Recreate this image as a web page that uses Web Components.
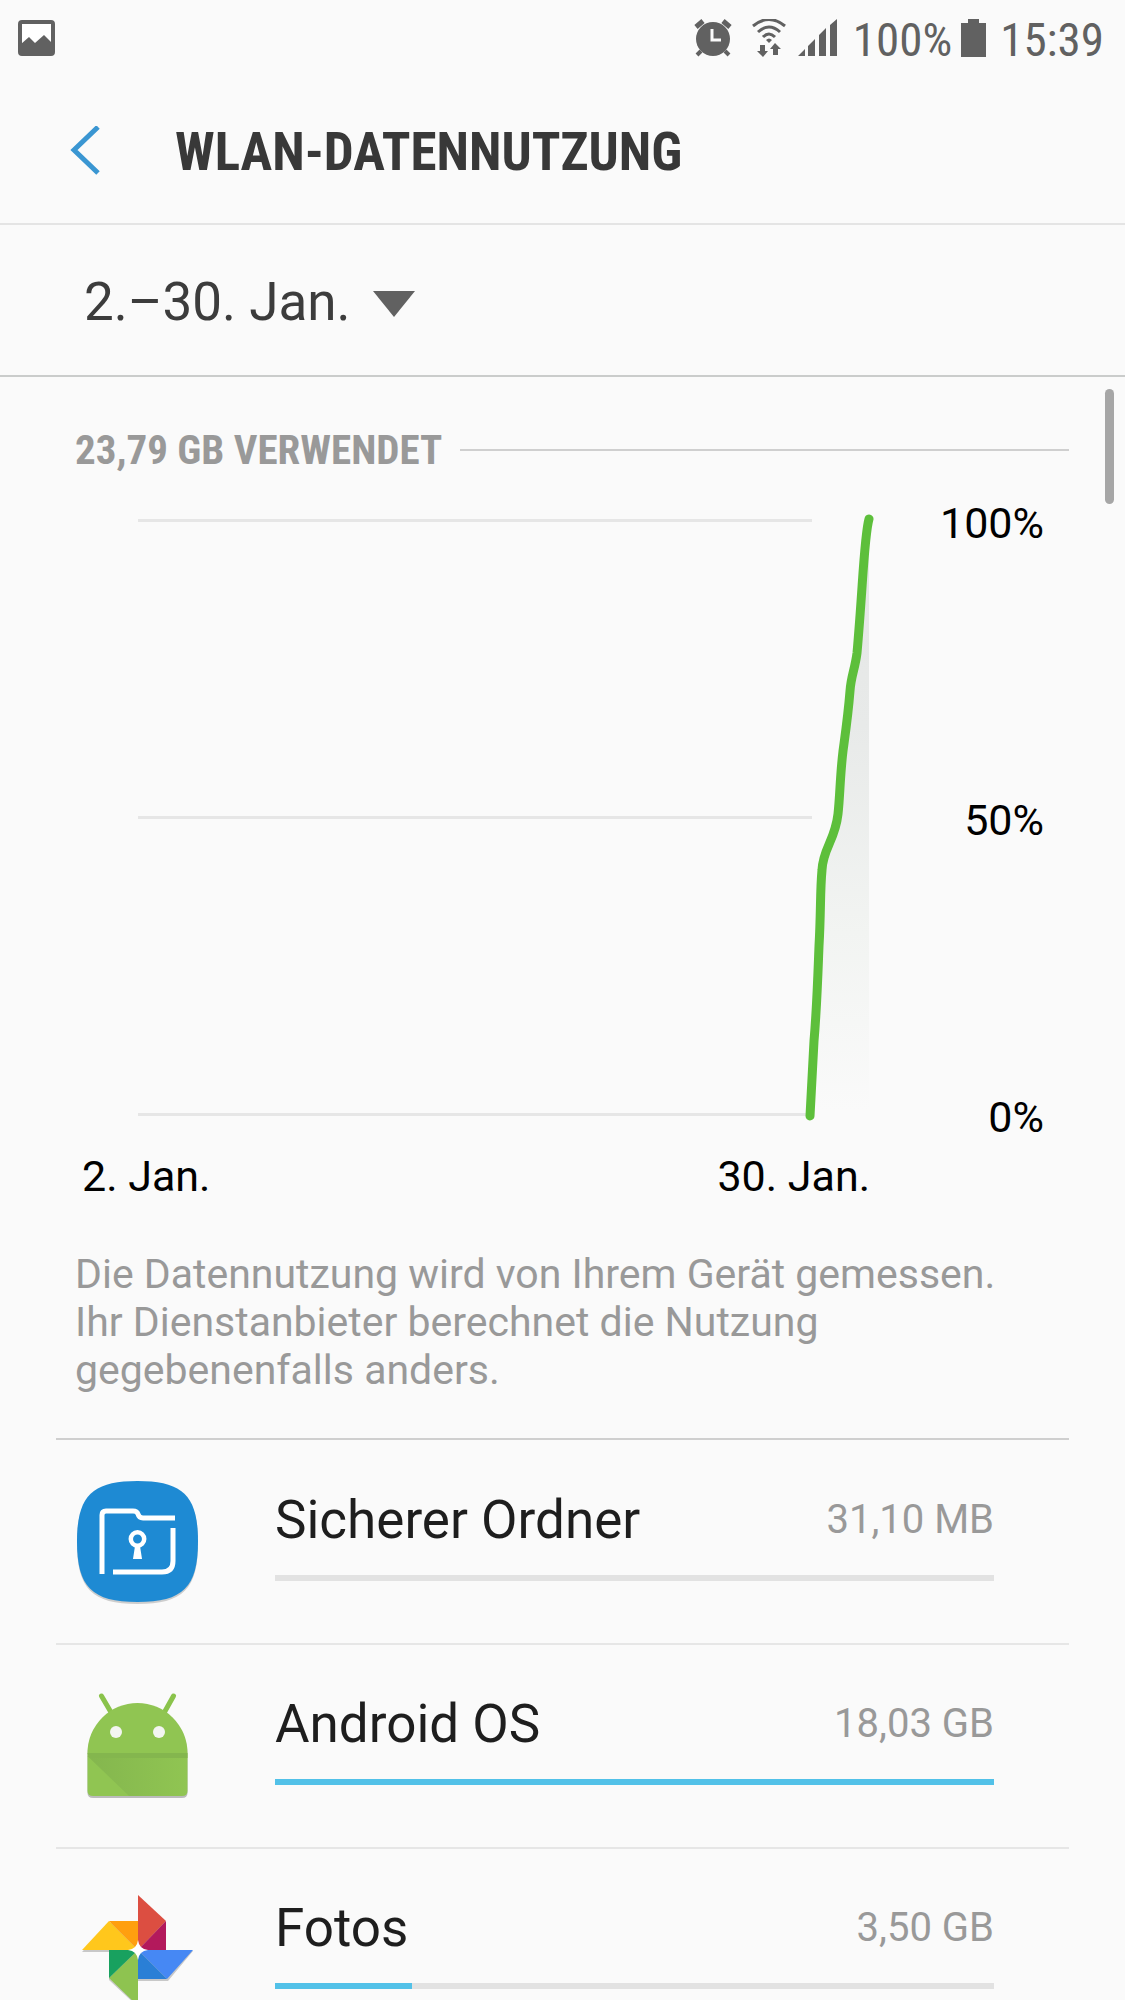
<!DOCTYPE html>
<html lang="de">
<head>
<meta charset="UTF-8">
<meta name="viewport" content="width=device-width, initial-scale=1.0">
<title>WLAN-Datennutzung</title>
<style>
  html, body {
    height: 100%;
    margin: 0;
  }
  body {
    background: #fafafa;
    color: #000;
    font-family: Roboto, sans-serif;
    --condensed: "Roboto Condensed", "Liberation Sans Narrow", Roboto, sans-serif;
    --muted: #999;
    --accent: #52c1e8;
  }
</style>
</head>
<body>
<data-usage-screen>
  <status-bar slot="status" battery="100%" time="15:39"></status-bar>
  <title-bar slot="title">WLAN-DATENNUTZUNG</title-bar>
  <cycle-picker slot="cycle"></cycle-picker>
  <section-heading>23,79 GB VERWENDET</section-heading>
  <usage-chart>
    <span slot="start">2. Jan.</span>
    <span slot="end">30. Jan.</span>
  </usage-chart>
  <usage-note>Die Datennutzung wird von Ihrem Gerät gemessen. Ihr Dienstanbieter berechnet die Nutzung gegebenenfalls anders.</usage-note>
  <app-row name="Sicherer Ordner" amount="31,10 MB" percent="0" first>
    <svg slot="icon" viewBox="0 0 122 122" aria-hidden="true">
      <path d="M60.500 2C106 2 121 16 121 62S106 123 60.500 123S0 108 0 62S15 2 60.500 2Z" fill="#000" opacity=".18"/>
      <path d="M60.500 0C106 0 121 15 121 60.500S106 121 60.500 121S0 106 0 60.500S15 0 60.500 0Z" fill="#1e8ad3"/>
      <path d="M25 93V34Q25 30 29 30H56Q60 30 61 33Q62 37 66 37H98" fill="none" stroke="#fff" stroke-width="5"/>
      <path d="M36 91H85Q96 91 96 80V47" fill="none" stroke="#fff" stroke-width="5"/>
      <circle cx="60.500" cy="58" r="6.700" fill="none" stroke="#fff" stroke-width="4.500"/>
      <path d="M58 65H63L65 78H56Z" fill="#fff"/>
    </svg>
  </app-row>
  <app-row name="Android OS" amount="18,03 GB" percent="100">
    <svg slot="icon" viewBox="0 0 122 122" aria-hidden="true">
      <defs>
        <linearGradient id="fold" x1="0" y1="0" x2="1" y2="0">
          <stop offset="0" stop-color="#84b64e"/>
          <stop offset="1" stop-color="#84b64e" stop-opacity="0"/>
        </linearGradient>
      </defs>
      <path d="M10.500 70A50 50 0 0 1 110.500 70V108Q110.500 113 105 113H16Q10.500 113 10.500 108Z" fill="#000" opacity=".25"/>
      <path d="M24.500 11L35 29M96.500 11L87 28" stroke="#8ac34b" stroke-width="5" stroke-linecap="round"/>
      <path d="M10.500 68A50 50 0 0 1 110.500 68V106Q110.500 111 105 111H16Q10.500 111 10.500 106Z" fill="#90c552"/>
      <path d="M10.500 71H110.500V107Q109 111 105 111H52Z" fill="url(#fold)"/>
      <path d="M10.500 68H110.500V73H12Z" fill="#84b64e"/>
      <circle cx="39" cy="47" r="6" fill="#f3f5f1"/>
      <circle cx="82" cy="47" r="6" fill="#f3f5f1"/>
    </svg>
  </app-row>
  <app-row name="Fotos" amount="3,50 GB" percent="19">
    <svg slot="icon" viewBox="0 0 122 122" aria-hidden="true">
      <path d="M61 8L89 34V61L116 62L91 92H61V118L32 91V63H5L32 34H61Z" fill="#000" opacity=".2"/>
      <path d="M61 6L89 32L61 61Z" fill="#dc4e41"/>
      <path d="M89 32V61H61Z" fill="#b3195c"/>
      <path d="M61 61H116L90 90Z" fill="#4688f4"/>
      <path d="M61 61L90 90H61Z" fill="#2a7fd6"/>
      <path d="M61 61V117L32 89Z" fill="#8ec350"/>
      <path d="M61 61L32 89V61Z" fill="#18a15f"/>
      <path d="M61 61H5L32 32Z" fill="#ffc71c"/>
      <path d="M61 61L32 32H61Z" fill="#ff9f0f"/>
      <path d="M61 51Q62 60 71 61Q62 62 61 71Q60 62 51 61Q60 60 61 51Z" fill="#fff"/>
    </svg>
  </app-row>
</data-usage-screen>

<script>
class DataUsageScreen extends HTMLElement {
  connectedCallback() {
    this.attachShadow({ mode: 'open' });
    this.shadowRoot.innerHTML = `
      <style>
        :host {
          display: flex;
          flex-direction: column;
          height: 100vh;
          overflow: hidden;
        }
        .content {
          position: relative;
          flex: 1;
          min-height: 0;
        }
        main {
          height: 100%;
          overflow-y: auto;
          scrollbar-width: none;
          box-sizing: border-box;
          padding: 0 56px;
        }
        /* overlay thumb, drawn above the list */
        .thumb {
          position: absolute;
          top: 12px;
          right: 11px;
          width: 9px;
          height: 115px;
          border-radius: 5px;
          background: #a6a6a6;
        }
      </style>
      <slot name="status"></slot>
      <slot name="title"></slot>
      <slot name="cycle"></slot>
      <div class="content">
        <main><slot></slot></main>
        <div class="thumb"></div>
      </div>
    `;
  }
}
customElements.define('data-usage-screen', DataUsageScreen);

class StatusBar extends HTMLElement {
  connectedCallback() {
    this.attachShadow({ mode: 'open' });
    this.shadowRoot.innerHTML = `
      <style>
        :host {
          display: flex;
          align-items: center;
          justify-content: space-between;
          flex: none;
          height: 78px;
          padding: 0 21px 0 18px;
          color: #616161;
          font-family: var(--condensed);
          font-size: 47px;
        }
        .right {
          display: flex;
          align-items: center;
        }
        svg {
          display: block;
          flex: none;
          height: 40px;
        }
        .alarm { margin-right: 20px; }
        .wifi { margin-right: 12px; }
        .signal { margin-right: 16px; }
        .battery { margin: 0 14px 0 9px; }
      </style>
      <svg width="38" viewBox="0 0 38 40" aria-hidden="true">
        <rect x="2" y="3" width="33" height="32" rx="2" fill="#fff" stroke="#616161" stroke-width="4"/>
        <path d="M3 25L11 18L17 24L26 16L34 24V35H3Z" fill="#616161"/>
      </svg>
      <div class="right">
        <svg class="alarm" width="38" viewBox="0 0 38 40" aria-hidden="true">
          <circle cx="19" cy="20" r="17" fill="#616161"/>
          <path d="M2 8L9 2M36 8L29 2" stroke="#616161" stroke-width="5"/>
          <path d="M7 32L3 36M31 32L35 36" stroke="#616161" stroke-width="4"/>
          <path d="M18 10V21H27" fill="none" stroke="#fafafa" stroke-width="3"/>
        </svg>
        <svg class="wifi" width="34" viewBox="0 0 34 40" aria-hidden="true">
          <path d="M1 7Q17 -6 33 7M6 13Q17 3 28 13M11 18Q17 12 23 18" fill="none" stroke="#616161" stroke-width="3"/>
          <path d="M14 21Q17 18 20 21L17 24Z" fill="#616161"/>
          <path d="M8 26H13V32H16L11 38L5 32H8ZM21 36H26V30H29L23 24L18 30H21Z" fill="#616161"/>
        </svg>
        <svg class="signal" width="39" viewBox="0 0 39 40" aria-hidden="true">
          <path d="M0 37L7 30V37ZM10 37V27L17 20V37ZM21 37V16L28 9V37ZM32 37V6L39 0V37Z" fill="#616161"/>
        </svg>
        <span>${this.getAttribute('battery')}</span>
        <svg class="battery" width="25" viewBox="0 0 25 40" aria-hidden="true">
          <path d="M0 4H7V0H18V4H25V38H0Z" fill="#616161"/>
        </svg>
        <span>${this.getAttribute('time')}</span>
      </div>
    `;
  }
}
customElements.define('status-bar', StatusBar);

class TitleBar extends HTMLElement {
  connectedCallback() {
    this.attachShadow({ mode: 'open' });
    this.shadowRoot.innerHTML = `
      <style>
        :host {
          display: flex;
          align-items: center;
          flex: none;
          gap: 73px;
          box-sizing: border-box;
          height: 147px;
          padding: 0 56px 0 70px;
          border-bottom: 2px solid #e4e4e4;
        }
        button {
          padding: 0;
          border: 0;
          background: none;
        }
        svg { display: block; }
        h1 {
          margin: 0;
          padding-top: 2px;
          color: #383838;
          font-family: var(--condensed);
          font-size: 53px;
          font-weight: 700;
        }
      </style>
      <button type="button" aria-label="Zurück">
        <svg width="32" height="50" viewBox="0 0 32 50">
          <path d="M28 1L4 24L28 47" fill="none" stroke="#3a96d2" stroke-width="5"/>
        </svg>
      </button>
      <h1><slot></slot></h1>
    `;
  }
}
customElements.define('title-bar', TitleBar);

class CyclePicker extends HTMLElement {
  connectedCallback() {
    this.attachShadow({ mode: 'open' });
    this.shadowRoot.innerHTML = `
      <style>
        :host {
          display: flex;
          align-items: center;
          flex: none;
          box-sizing: border-box;
          height: 152px;
          padding: 4px 84px 0;
          border-bottom: 2px solid #cacccb;
        }
        label {
          display: flex;
          align-items: center;
          gap: 22px;
        }
        select {
          appearance: none;
          field-sizing: content;
          margin: 0;
          padding: 0;
          border: 0;
          background: none;
          color: #3c3c3c;
          font-family: inherit;
          font-size: 53px;
          line-height: 64px;
        }
        svg {
          display: block;
          padding-top: 4px;
        }
      </style>
      <label>
        <select aria-label="Zeitraum">
          <option>2.–30. Jan.</option>
        </select>
        <svg width="42" height="26" viewBox="0 0 42 26" aria-hidden="true">
          <path d="M0 0H42L21 26Z" fill="#616161"/>
        </svg>
      </label>
    `;
  }
}
customElements.define('cycle-picker', CyclePicker);

class SectionHeading extends HTMLElement {
  connectedCallback() {
    this.attachShadow({ mode: 'open' });
    this.shadowRoot.innerHTML = `
      <style>
        :host {
          display: flex;
          align-items: center;
          gap: 18px;
          padding: 49px 0 0 19px;
        }
        h2 {
          margin: 0;
          color: var(--muted);
          font-family: var(--condensed);
          font-size: 41px;
          font-weight: 700;
          line-height: 48px;
        }
        .rule {
          flex: 1;
          height: 2px;
          background: #cfcfcf;
        }
      </style>
      <h2><slot></slot></h2>
      <div class="rule"></div>
    `;
  }
}
customElements.define('section-heading', SectionHeading);

class UsageChart extends HTMLElement {
  connectedCallback() {
    this.attachShadow({ mode: 'open' });
    this.shadowRoot.innerHTML = `
      <style>
        :host {
          display: block;
          padding: 23px 25px 0 26px;
          font-size: 43px;
          line-height: 52px;
        }
        .plot {
          display: flex;
          gap: 40px;
        }
        svg {
          display: block;
          flex: 1;
          min-width: 0;
        }
        .scale {
          display: flex;
          flex: 0 0 106px;
          flex-direction: column;
          justify-content: space-between;
          text-align: right;
        }
        .dates {
          display: flex;
          justify-content: space-between;
          padding: 7px 174px 0 0;
        }
      </style>
      <div class="plot">
        <svg viewBox="82 497 816 646" role="img" aria-label="Datennutzung">
          <defs>
            <linearGradient id="shade" gradientUnits="userSpaceOnUse" x1="0" y1="520" x2="0" y2="1110">
              <stop offset="0" stop-color="#e4e6e5"/>
              <stop offset=".35" stop-color="#e8eae9"/>
              <stop offset=".7" stop-color="#f2f4f2"/>
              <stop offset="1" stop-color="#fafafa"/>
            </linearGradient>
          </defs>
          <path d="M138 520.500H812M138 817.500H812M138 1114.500H812" stroke="#e6e6e6" stroke-width="3"/>
          <path d="M869 518C864 540 862 600 857 653C855 665 852 672 851 687C848 715 845 735 843 750C840 775 840 795 838 813C835 840 823 845 822 867C820 890 821 910 820 933C819 960 817 1005 814 1040L810 1115H869Z" fill="url(#shade)"/>
          <path d="M869 519C864 536 863 586 857 653C855 669 851 676 850 691C848 716 845 736 843 751C840 776 840 796 838 814C835 841 823 848 822 870C820 891 821 911 819 946C818 971 817 1006 814 1041L810 1116" fill="none" stroke="#5dbf3b" stroke-width="9" stroke-linecap="round" stroke-linejoin="round"/>
        </svg>
        <div class="scale">
          <span>100%</span>
          <span>50%</span>
          <span>0%</span>
        </div>
      </div>
      <div class="dates">
        <slot name="start"></slot>
        <slot name="end"></slot>
      </div>
    `;
  }
}
customElements.define('usage-chart', UsageChart);

class UsageNote extends HTMLElement {
  connectedCallback() {
    this.attachShadow({ mode: 'open' });
    this.shadowRoot.innerHTML = `
      <style>
        :host {
          display: block;
          padding: 48px 56px 44px 19px;
          color: var(--muted);
          font-size: 41px;
          line-height: 48px;
        }
        p { margin: 0; }
      </style>
      <p><slot></slot></p>
    `;
  }
}
customElements.define('usage-note', UsageNote);

class AppRow extends HTMLElement {
  connectedCallback() {
    const name = this.getAttribute('name');
    this.attachShadow({ mode: 'open' });
    this.shadowRoot.innerHTML = `
      <style>
        :host {
          display: flex;
          gap: 76px;
          box-sizing: border-box;
          height: 204px;
          padding: 0 75px 0 21px;
          border-top: 2px solid #e6e6e6;
        }
        :host([first]) {
          height: 205px;
          padding-top: 1px;
          border-top-color: #cfcfcf;
        }
        ::slotted(svg) {
          display: block;
          flex: none;
          width: 122px;
          height: 122px;
          margin-top: 40px;
          overflow: visible;
        }
        .body {
          flex: 1;
          padding-top: 47px;
        }
        .line {
          display: flex;
          align-items: center;
          justify-content: space-between;
          line-height: 64px;
        }
        .name {
          color: #1e1e1e;
          font-size: 53px;
        }
        .amount {
          color: var(--muted);
          font-size: 40px;
        }
        progress {
          appearance: none;
          display: block;
          width: 100%;
          height: 6px;
          margin-top: 23px;
          border: 0;
          background: #e2e2e2;
        }
        progress::-webkit-progress-bar { background: #e2e2e2; }
        progress::-webkit-progress-value { background: var(--accent); }
      </style>
      <slot name="icon"></slot>
      <div class="body">
        <div class="line">
          <span class="name">${name}</span>
          <span class="amount">${this.getAttribute('amount')}</span>
        </div>
        <progress aria-label="${name}" max="100" value="${this.getAttribute('percent')}"></progress>
      </div>
    `;
  }
}
customElements.define('app-row', AppRow);
</script>
</body>
</html>
